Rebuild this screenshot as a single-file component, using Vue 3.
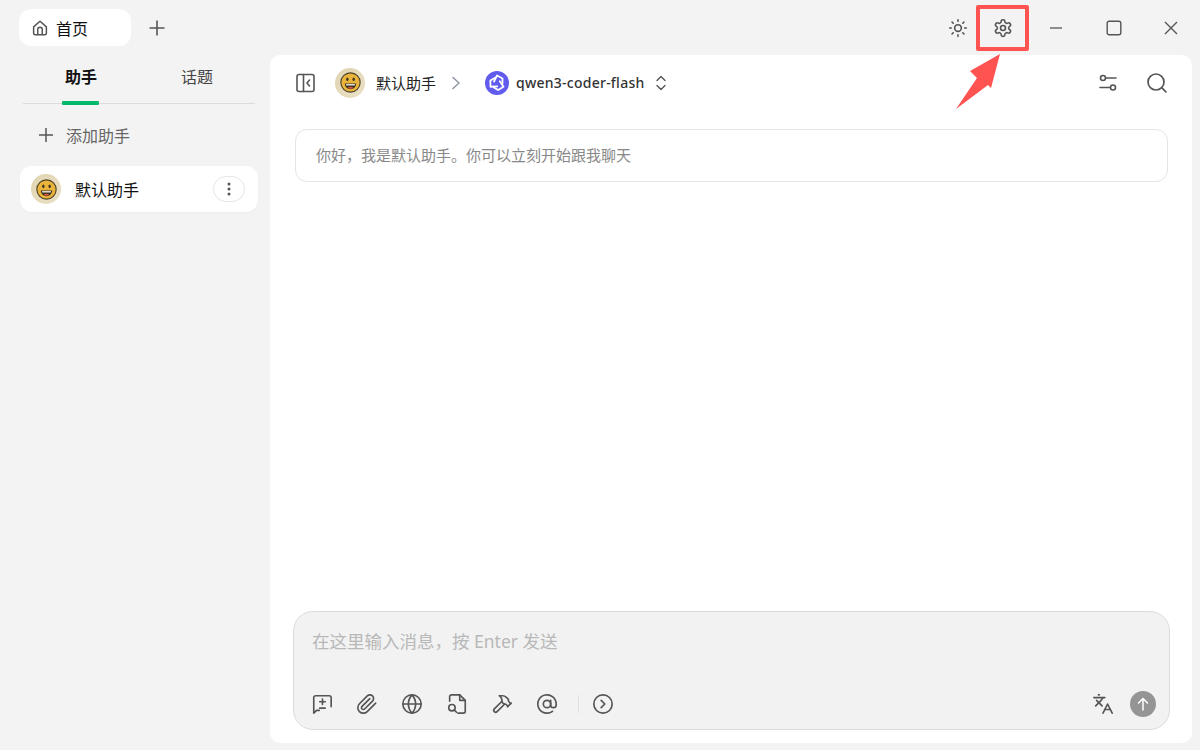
<script setup>
const toolbarLeft = ['quick', 'clip', 'globe', 'file', 'hammer', 'at']
</script>

<template>
  <div class="app">
    <header class="titlebar">
      <div class="home-tab">
        <svg class="home-icon" width="18" height="18" viewBox="0 0 24 24" fill="none" stroke="currentColor" stroke-width="2" stroke-linejoin="round">
          <path d="M3.5 10.5 12 3l8.5 7.5V19a2 2 0 0 1-2 2h-13a2 2 0 0 1-2-2z"/>
          <path d="M9 21v-7a3 3 0 0 1 6 0v7"/>
        </svg>
        <span>首页</span>
      </div>
      <button class="add-tab">
        <svg width="20" height="20" viewBox="0 0 20 20" fill="none" stroke="currentColor" stroke-width="1.6"><path d="M10 2.5v15M2.5 10h15"/></svg>
      </button>
      <div class="spacer"></div>
      <button class="bar-btn">
        <svg width="20" height="20" viewBox="0 0 24 24" fill="none" stroke="currentColor" stroke-width="1.9" stroke-linecap="round">
          <circle cx="12" cy="12" r="4"/>
          <path d="M12 2v2M12 20v2M4.9 4.9l1.4 1.4M17.7 17.7l1.4 1.4M2 12h2M20 12h2M6.3 17.7l-1.4 1.4M19.1 4.9l-1.4 1.4"/>
        </svg>
      </button>
      <button class="bar-btn">
        <svg width="20" height="20" viewBox="0 0 24 24" fill="none" stroke="currentColor" stroke-width="1.9" stroke-linecap="round" stroke-linejoin="round">
          <path d="M12.22 2h-.44a2 2 0 0 0-2 2v.18a2 2 0 0 1-1 1.73l-.43.25a2 2 0 0 1-2 0l-.15-.08a2 2 0 0 0-2.73.73l-.22.38a2 2 0 0 0 .73 2.73l.15.1a2 2 0 0 1 1 1.72v.51a2 2 0 0 1-1 1.74l-.15.09a2 2 0 0 0-.73 2.73l.22.38a2 2 0 0 0 2.73.73l.15-.08a2 2 0 0 1 2 0l.43.25a2 2 0 0 1 1 1.73V20a2 2 0 0 0 2 2h.44a2 2 0 0 0 2-2v-.18a2 2 0 0 1 1-1.73l.43-.25a2 2 0 0 1 2 0l.15.08a2 2 0 0 0 2.73-.73l.22-.39a2 2 0 0 0-.73-2.73l-.15-.08a2 2 0 0 1-1-1.74v-.5a2 2 0 0 1 1-1.74l.15-.09a2 2 0 0 0 .73-2.73l-.22-.38a2 2 0 0 0-2.73-.73l-.15.08a2 2 0 0 1-2 0l-.43-.25a2 2 0 0 1-1-1.73V4a2 2 0 0 0-2-2z"/>
          <circle cx="12" cy="12" r="3"/>
        </svg>
      </button>
      <div class="win-controls">
        <button class="win-btn">
          <svg width="14" height="14" viewBox="0 0 14 14" stroke="currentColor" stroke-width="1.3"><path d="M1 7h12"/></svg>
        </button>
        <button class="win-btn">
          <svg width="16" height="16" viewBox="0 0 16 16" fill="none" stroke="currentColor" stroke-width="1.4"><rect x="1.2" y="1.2" width="13.6" height="13.6" rx="2"/></svg>
        </button>
        <button class="win-btn">
          <svg width="14" height="14" viewBox="0 0 14 14" stroke="currentColor" stroke-width="1.4"><path d="M1 1l12 12M13 1 1 13"/></svg>
        </button>
      </div>
    </header>

    <div class="body">
      <aside class="sidebar">
        <div class="side-tabs">
          <div class="side-tab active">助手</div>
          <div class="side-tab">话题</div>
        </div>
        <div class="add-assistant">
          <svg width="16" height="16" viewBox="0 0 16 16" stroke="currentColor" stroke-width="1.5"><path d="M8 1v14M1 8h14"/></svg>
          <span>添加助手</span>
        </div>
        <div class="assistant-item">
          <span class="avatar">
            <svg width="21" height="21" viewBox="0 0 20 20">
              <circle cx="10" cy="10" r="9.2" fill="#eab43c" stroke="#4d4326" stroke-width="1.1"/>
              <ellipse cx="7" cy="7" rx="1.1" ry="1.7" fill="#3a3220"/>
              <ellipse cx="13" cy="7" rx="1.1" ry="1.7" fill="#3a3220"/>
              <path d="M4.6 11h10.8c0 3.2-2.4 5.4-5.400 5.400S4.600 14.200 4.600 11z" fill="#3a3220"/>
              <path d="M5.800 11.600h8.400v1.200H5.800z" fill="#fff"/>
              <ellipse cx="10" cy="15" rx="2.400" ry="1" fill="#d9573f"/>
            </svg>
          </span>
          <span class="assistant-name">默认助手</span>
          <button class="more-btn">
            <svg width="4" height="14" viewBox="0 0 4 14" fill="#555"><circle cx="2" cy="2" r="1.5"/><circle cx="2" cy="7" r="1.5"/><circle cx="2" cy="12" r="1.5"/></svg>
          </button>
        </div>
      </aside>

      <main class="main">
        <div class="chat-head">
          <svg class="head-icon" width="22" height="22" viewBox="0 0 22 22" fill="none" stroke="#555" stroke-width="1.6" stroke-linecap="round" stroke-linejoin="round">
            <rect x="2" y="2.5" width="17" height="17" rx="2"/>
            <path d="M8.5 2.5v17M14.5 8 12 11l2.500 3"/>
          </svg>
          <span class="avatar head-avatar">
            <svg width="21" height="21" viewBox="0 0 20 20">
              <circle cx="10" cy="10" r="9.2" fill="#eab43c" stroke="#4d4326" stroke-width="1.1"/>
              <ellipse cx="7" cy="7" rx="1.1" ry="1.7" fill="#3a3220"/>
              <ellipse cx="13" cy="7" rx="1.1" ry="1.7" fill="#3a3220"/>
              <path d="M4.6 11h10.8c0 3.2-2.4 5.4-5.4 5.4S4.6 14.2 4.6 11z" fill="#3a3220"/>
              <path d="M5.8 11.6h8.4v1.2H5.800z" fill="#fff"/>
              <ellipse cx="10" cy="15" rx="2.4" ry="1" fill="#d9573f"/>
            </svg>
          </span>
          <span class="head-name">默认助手</span>
          <svg class="crumb" width="10" height="14" viewBox="0 0 10 14" fill="none" stroke="#8f95a3" stroke-width="1.5" stroke-linecap="round" stroke-linejoin="round"><path d="M2 1.5 8 7l-6 5.5"/></svg>
          <svg class="model-logo" width="24" height="24" viewBox="0 0 24 24">
            <circle cx="12" cy="12" r="12" fill="#615ced"/>
            <g fill="none" stroke="#fff" stroke-width="1.8" stroke-linejoin="round" stroke-linecap="round">
              <path d="M9 10.500 12 4.500l5.500 3v5"/>
              <path d="M9 10.500 12 4.500l5.500 3v5" transform="rotate(120 12 12)"/>
              <path d="M9 10.500 12 4.500l5.500 3v5" transform="rotate(240 12 12)"/>
            </g>
          </svg>
          <span class="model-name">qwen3-coder-flash</span>
          <svg class="updown" width="12" height="16" viewBox="0 0 12 16" fill="none" stroke="#555" stroke-width="1.4" stroke-linecap="round" stroke-linejoin="round"><path d="M2 5.5 6 1.5l4 4M2 10.5l4 4 4-4"/></svg>
          <div class="spacer"></div>
          <svg class="head-right" width="20" height="20" viewBox="0 0 20 20" fill="none" stroke="#555" stroke-width="1.6" stroke-linecap="round">
            <circle cx="5" cy="5" r="2.5"/><path d="M8 5h10"/>
            <circle cx="15" cy="14.5" r="2.5"/><path d="M2 14.5h10"/>
          </svg>
          <svg class="head-right search" width="22" height="22" viewBox="0 0 22 22" fill="none" stroke="#555" stroke-width="1.7" stroke-linecap="round">
            <circle cx="10" cy="10" r="8"/><path d="m16.2 16.2 3.800 3.800"/>
          </svg>
        </div>

        <div class="notice">你好，我是默认助手。你可以立刻开始跟我聊天</div>

        <div class="chat-fill"></div>

        <div class="composer">
          <div class="placeholder">在这里输入消息，按 Enter 发送</div>
          <div class="composer-tools">
            <template v-for="name in toolbarLeft" :key="name">
              <svg v-if="name === 'quick'" class="tool" viewBox="0 0 24 24" fill="none" stroke="currentColor" stroke-width="1.8" stroke-linecap="round" stroke-linejoin="round">
                <path d="M22 15V5a2 2 0 0 0-2-2H5a2 2 0 0 0-2 2v17l3-3h3"/>
                <path d="M12.500 6.500v6M9.500 9.500h6M9.500 16.500h6"/>
              </svg>
              <svg v-else-if="name === 'clip'" class="tool" viewBox="0 0 24 24" fill="none" stroke="currentColor" stroke-width="1.8" stroke-linecap="round" stroke-linejoin="round">
                <path d="m21.44 11.05-9.19 9.19a6 6 0 0 1-8.49-8.49l8.57-8.57A4 4 0 1 1 18 8.84l-8.59 8.57a2 2 0 0 1-2.83-2.83l8.49-8.48"/>
              </svg>
              <svg v-else-if="name === 'globe'" class="tool" viewBox="0 0 24 24" fill="none" stroke="currentColor" stroke-width="1.8" stroke-linecap="round" stroke-linejoin="round">
                <circle cx="12" cy="12" r="10"/><path d="M2 12h20"/><path d="M12 2a15.3 15.3 0 0 1 4 10 15.3 15.3 0 0 1-4 10 15.3 15.3 0 0 1-4-10 15.3 15.3 0 0 1 4-10z"/>
              </svg>
              <svg v-else-if="name === 'file'" class="tool" viewBox="0 0 24 24" fill="none" stroke="currentColor" stroke-width="1.8" stroke-linecap="round" stroke-linejoin="round">
                <path d="M4 9V4a2 2 0 0 1 2-2h9l6 6v12a2 2 0 0 1-2 2h-6"/><path d="M15 2v6h6"/>
                <circle cx="6.5" cy="16" r="3.5"/><path d="m9 18.5 2.5 2.5"/>
              </svg>
              <svg v-else-if="name === 'hammer'" class="tool" viewBox="0 0 24 24" fill="none" stroke="currentColor" stroke-width="1.8" stroke-linecap="round" stroke-linejoin="round">
                <path d="m15 12-8.373 8.373a1 1 0 1 1-3-3L12 9"/><path d="m18 15 4-4"/>
                <path d="m21.5 11.5-1.914-1.914A2 2 0 0 1 19 8.172V7l-2.26-2.26a6 6 0 0 0-4.202-1.756L9 2.96l.92.82A6.18 6.18 0 0 1 12 8.4V10l2 2h1.172a2 2 0 0 1 1.414.586L18.5 14.5"/>
              </svg>
              <svg v-else class="tool" viewBox="0 0 24 24" fill="none" stroke="currentColor" stroke-width="1.8" stroke-linecap="round" stroke-linejoin="round">
                <circle cx="12" cy="12" r="4"/><path d="M16 8v5a3 3 0 0 0 6 0v-1a10 10 0 1 0-4 8"/>
              </svg>
            </template>
            <span class="tool-sep"></span>
            <svg class="tool expand" viewBox="0 0 24 24" fill="none" stroke="currentColor" stroke-width="1.8" stroke-linecap="round" stroke-linejoin="round">
              <circle cx="12" cy="12" r="10"/><path d="m10 8 4 4-4 4"/>
            </svg>
            <div class="spacer"></div>
            <svg class="tool translate" viewBox="0 0 24 24" fill="none" stroke="currentColor" stroke-width="1.8" stroke-linecap="round" stroke-linejoin="round">
              <path d="m5 8 6 6"/><path d="m4 14 6-6 2-3"/><path d="M2 5h12"/><path d="M7 2h1"/><path d="m22 22-5-10-5 10"/><path d="M14 18h6"/>
            </svg>
            <button class="send">
              <svg width="14" height="14" viewBox="0 0 14 14" fill="none" stroke="#fff" stroke-width="1.5" stroke-linecap="round" stroke-linejoin="round"><path d="M7 13V1.5M2.5 6 7 1.5 11.5 6"/></svg>
            </button>
          </div>
        </div>
      </main>
    </div>

    <!-- annotation drawn over the screenshot -->
    <div class="mark-box"></div>
    <svg class="mark-arrow" width="50" height="60" viewBox="0 0 50 60">
      <path d="M45 1 15 18l7 7L1 56l32-24 3 3z" fill="#ff5352"/>
    </svg>
  </div>
</template>

<style scoped>
.app {
  position: relative;
  width: 1200px;
  height: 750px;
  display: flex;
  flex-direction: column;
  background: #f3f3f3;
  font-family: "Noto Sans", "Noto Sans CJK SC", sans-serif;
  color: #222;
  overflow: hidden;
}

button {
  border: none;
  background: none;
  padding: 0;
  color: inherit;
  display: flex;
  align-items: center;
  justify-content: center;
}

.spacer {
  flex: 1;
}

.titlebar {
  height: 55px;
  flex-shrink: 0;
  display: flex;
  align-items: center;
  padding-left: 19px;
  color: #555;
}

.home-tab {
  width: 112px;
  height: 37px;
  box-sizing: border-box;
  padding-left: 12px;
  display: flex;
  align-items: center;
  gap: 7px;
  background: #fff;
  border-radius: 12px;
  font-size: 16px;
  color: #111;
}

.home-icon {
  color: #555;
}

.add-tab {
  width: 20px;
  height: 20px;
  margin-left: 16px;
}

.bar-btn {
  width: 45px;
  height: 45px;
}

.win-controls {
  display: flex;
  margin-left: 2px;
}

.win-btn {
  width: 57.5px;
  height: 45px;
}

.body {
  flex: 1;
  display: flex;
  min-height: 0;
  padding-bottom: 7px;
  padding-right: 8px;
}

.sidebar {
  width: 270px;
  flex-shrink: 0;
}

.side-tabs {
  display: flex;
  height: 48px;
  margin: 0 15px 0 23px;
  border-bottom: 1px solid #dcdcdc;
}

.side-tab {
  position: relative;
  flex: 1;
  text-align: center;
  padding-top: 10px;
  font-size: 16px;
  line-height: 24px;
  color: #444;
}

.side-tab.active {
  color: #111;
  font-weight: 700;
}

.side-tab.active::after {
  content: "";
  position: absolute;
  left: 39px;
  bottom: -2px;
  width: 37px;
  height: 4px;
  border-radius: 1px;
  background: #00b96b;
}

.add-assistant {
  display: flex;
  align-items: center;
  height: 24px;
  margin: 19px 0 19px 38px;
  gap: 12px;
  font-size: 16px;
  color: #666;
}

.add-assistant svg {
  color: #555;
}

.assistant-item {
  width: 238px;
  height: 46px;
  margin-left: 20px;
  box-sizing: border-box;
  display: flex;
  align-items: center;
  padding: 0 13px 0 11px;
  background: #fff;
  border-radius: 12px;
  box-shadow: 0 1px 2px rgba(0, 0, 0, 0.03);
}

.avatar {
  width: 30px;
  height: 30px;
  flex-shrink: 0;
  border-radius: 50%;
  display: flex;
  align-items: center;
  justify-content: center;
  background: radial-gradient(circle at 60% 60%, #efe6cf, #dccfa8);
}

.assistant-name {
  flex: 1;
  margin-left: 14px;
  font-size: 16px;
  color: #111;
}

.more-btn {
  width: 32px;
  height: 26px;
  box-sizing: border-box;
  border: 1px solid #e6e6e6;
  border-radius: 13px;
  background: #fff;
}

.main {
  flex: 1;
  min-width: 0;
  display: flex;
  flex-direction: column;
  background: #fff;
  border-radius: 10px;
}

.chat-head {
  height: 55px;
  flex-shrink: 0;
  display: flex;
  align-items: center;
  padding-left: 25px;
}

.head-avatar {
  margin-left: 18px;
}

.head-name {
  margin-left: 11px;
  font-size: 15px;
  color: #222;
}

.crumb {
  margin-left: 15px;
}

.model-logo {
  margin-left: 24px;
}

.model-name {
  margin-left: 7px;
  font-size: 14px;
  font-weight: 500;
  letter-spacing: 0.25px;
  color: #333;
}

.updown {
  margin-left: 10px;
}

.head-right.search {
  margin-left: 28px;
  margin-right: 24px;
}

.notice {
  height: 53px;
  margin: 19px 24px 0 25px;
  box-sizing: border-box;
  padding: 0 0 2px 20px;
  display: flex;
  align-items: center;
  border: 1px solid #e4e4e4;
  border-radius: 12px;
  font-size: 15px;
  color: #888;
}

.chat-fill {
  flex: 1;
}

.composer {
  height: 119px;
  margin: 0 22px 13px 23px;
  box-sizing: border-box;
  display: flex;
  flex-direction: column;
  justify-content: space-between;
  padding: 16px 13px 12px 17px;
  background: #f2f2f2;
  border: 1px solid #dcdcdc;
  border-radius: 20px;
}

.placeholder {
  margin-left: 1px;
  font-size: 17.5px;
  line-height: 26px;
  color: #b8b8b8;
}

.composer-tools {
  display: flex;
  align-items: center;
  height: 26px;
  color: #555;
}

.tool {
  width: 22px;
  height: 22px;
  flex-shrink: 0;
  margin-right: 23px;
}

.tool-sep {
  width: 1px;
  height: 18px;
  margin: 0 13px 0 -3px;
  background: #e0e0e0;
}

.tool.expand {
  margin-right: 0;
}

.tool.translate {
  margin-right: 16px;
}

.send {
  width: 26px;
  height: 26px;
  border-radius: 50%;
  background: #959595;
}

.mark-box {
  position: absolute;
  left: 976px;
  top: 5px;
  width: 53px;
  height: 46px;
  box-sizing: border-box;
  border: 4px solid #ff5352;
  border-radius: 2px;
}

.mark-arrow {
  position: absolute;
  left: 955px;
  top: 53px;
}
</style>
